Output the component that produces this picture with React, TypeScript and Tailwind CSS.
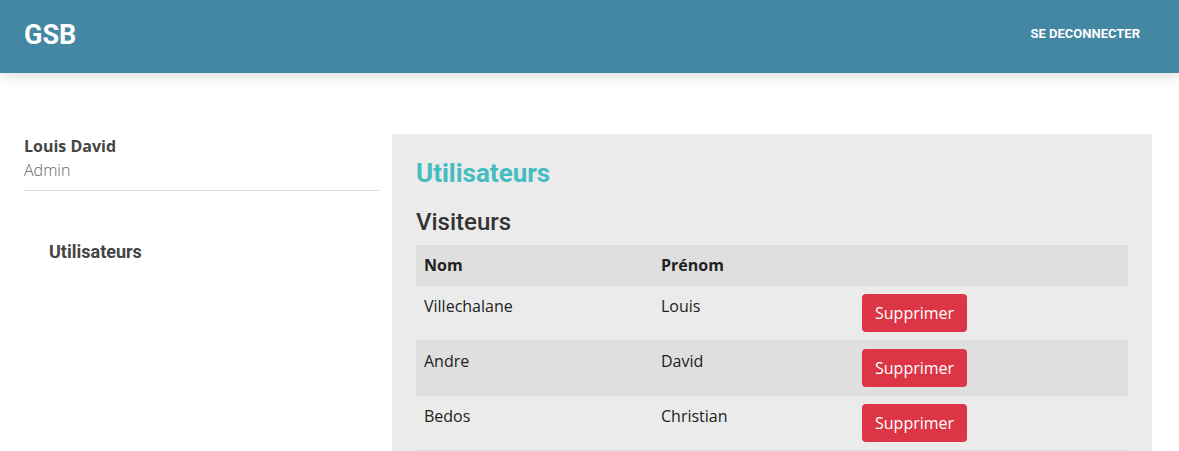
const visiteurs = [
  { nom: "Villechalane", prenom: "Louis" },
  { nom: "Andre", prenom: "David" },
  { nom: "Bedos", prenom: "Christian" },
];

export default function App() {
  return (
    <div className="min-h-screen bg-white font-['Open_Sans',sans-serif] text-[#333]">
      <header className="h-[73px] bg-[#4487a2] text-white shadow-[0_4px_12px_rgba(0,0,0,0.12)] flex items-center justify-between pl-6 pr-[39px]">
        <span className="font-['Roboto',sans-serif] font-bold text-[27px] pb-[2px]">GSB</span>
        <a href="#" className="font-['Roboto',sans-serif] font-bold text-[13px] uppercase pb-[6px]">
          Se deconnecter
        </a>
      </header>

      <div className="flex gap-3 pl-6 pt-[61px]">
        <aside className="w-[356px] shrink-0">
          <div className="border-b border-[#dddde3] pb-2">
            <div className="font-bold text-base leading-6 text-[#444]">Louis David</div>
            <div className="font-light text-base leading-6 text-[#666]">Admin</div>
          </div>
          <nav className="pl-[25px] pt-[49px]">
            <a href="#" className="font-['Roboto',sans-serif] font-bold text-lg leading-6 text-[#444]">
              Utilisateurs
            </a>
          </nav>
        </aside>

        <main className="w-[760px] bg-[#ebebeb] px-6 pt-6 pb-6">
          <h1 className="font-['Roboto',sans-serif] font-bold text-[26px] leading-[30px] text-[#45bcc0]">
            Utilisateurs
          </h1>
          <h2 className="font-['Roboto',sans-serif] font-medium text-2xl leading-[26px] text-[#333] mt-[21px] mb-[10px]">
            Visiteurs
          </h2>
          <table className="w-[712px] border-collapse text-base">
            <thead>
              <tr className="bg-[#dfdfdf] text-left">
                <th className="w-[237px] p-2 leading-6 font-bold text-[#222]">Nom</th>
                <th className="w-[201px] p-2 leading-6 font-bold text-[#222]">Prénom</th>
                <th className="p-2"></th>
              </tr>
            </thead>
            <tbody>
              {visiteurs.map((v, i) => (
                <tr
                  key={v.nom}
                  className={`border-t border-[#dfdfdf] ${i % 2 === 1 ? "bg-[#dfdfdf]" : ""}`}
                >
                  <td className="p-2 align-top leading-6 text-[#222]">{v.nom}</td>
                  <td className="p-2 align-top leading-6 text-[#222]">{v.prenom}</td>
                  <td className="p-2 align-top">
                    <button className="h-[38px] rounded bg-[#dc3545] px-[13px] text-base text-white">
                      Supprimer
                    </button>
                  </td>
                </tr>
              ))}
              <tr className="border-t border-[#dfdfdf]"></tr>
            </tbody>
          </table>
        </main>
      </div>
    </div>
  );
}
